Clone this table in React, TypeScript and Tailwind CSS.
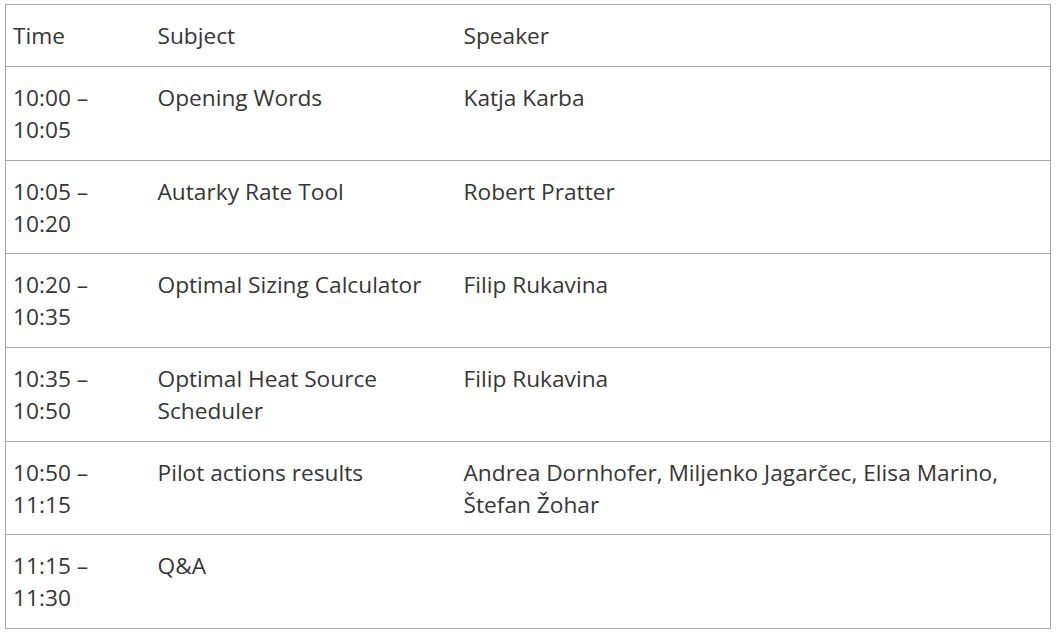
const rows = [
  { time: ['10:00 –', '10:05'], subject: ['Opening Words'], speaker: ['Katja Karba'] },
  { time: ['10:05 –', '10:20'], subject: ['Autarky Rate Tool'], speaker: ['Robert Pratter'] },
  { time: ['10:20 –', '10:35'], subject: ['Optimal Sizing Calculator'], speaker: ['Filip Rukavina'] },
  { time: ['10:35 –', '10:50'], subject: ['Optimal Heat Source', 'Scheduler'], speaker: ['Filip Rukavina'] },
  {
    time: ['10:50 –', '11:15'],
    subject: ['Pilot actions results'],
    speaker: ['Andrea Dornhofer, Miljenko Jagarčec, Elisa Marino,', 'Štefan Žohar'],
  },
  { time: ['11:15 –', '11:30'], subject: ['Q&A'], speaker: [] as string[] },
];

const Lines = ({ lines }: { lines: string[] }) => (
  <>
    {lines.map((l, i) => (
      <span key={i} className="block whitespace-nowrap">
        {l}
      </span>
    ))}
  </>
);

export default function App() {
  return (
    <div className="bg-white min-h-screen pt-[4px] pl-[5px] font-['Open_Sans',sans-serif] text-[#363636]">
      <table className="border-collapse border border-[#a4aaab] w-[1046px] text-[22.7px] leading-[32px]">
        <thead>
          <tr className="border-b border-[#a4aaab] text-left">
            <th className="font-normal w-[145px] px-[7px] pt-[15px] pb-[14px] align-top">Time</th>
            <th className="font-normal w-[306px] px-[7px] pt-[15px] pb-[14px] align-top">Subject</th>
            <th className="font-normal px-[7px] pt-[15px] pb-[14px] align-top">Speaker</th>
          </tr>
        </thead>
        <tbody>
          {rows.map((r) => (
            <tr key={r.time[0]} className="border-b border-[#a4aaab]">
              <td className="px-[7px] pt-[15px] pb-[13.7px] align-top">
                <Lines lines={r.time} />
              </td>
              <td className="px-[7px] pt-[15px] pb-[13.7px] align-top">
                <Lines lines={r.subject} />
              </td>
              <td className="px-[7px] pt-[15px] pb-[13.7px] align-top">
                <Lines lines={r.speaker} />
              </td>
            </tr>
          ))}
        </tbody>
      </table>
    </div>
  );
}
